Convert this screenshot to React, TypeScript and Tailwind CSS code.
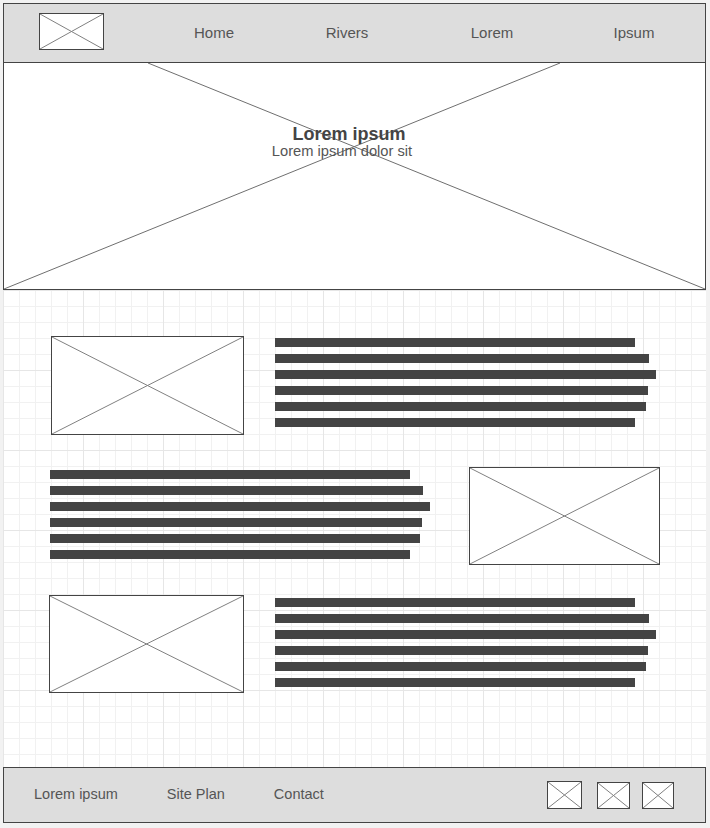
import React from "react";

function Placeholder({ className = "" }: { className?: string }) {
  return (
    <div className={`relative shrink-0 border border-[#444] bg-white ${className}`}>
      <svg className="absolute inset-0 h-full w-full" viewBox="0 0 100 100" preserveAspectRatio="none">
        <line x1="0" y1="0" x2="100" y2="100" stroke="#808080" strokeWidth="1" vectorEffect="non-scaling-stroke" />
        <line x1="100" y1="0" x2="0" y2="100" stroke="#808080" strokeWidth="1" vectorEffect="non-scaling-stroke" />
      </svg>
    </div>
  );
}

function Bars({ widths }: { widths: number[] }) {
  return (
    <div className="flex flex-col gap-[7px]">
      {widths.map((w, i) => (
        <div key={i} className="h-[9px] bg-[#444]" style={{ width: w }} />
      ))}
    </div>
  );
}

const rightBars = [360, 374, 381, 373, 371, 360];
const leftBars = [360, 373, 380, 372, 370, 360];

export default function App() {
  return (
    <div className="h-[828px] w-[710px] bg-[#f2f2f2] pl-[3px] pt-[3px] font-['Liberation_Sans',Arial,sans-serif]">
      <div className="w-[703px]">
        {/* Header */}
        <header className="flex h-[60px] items-center border border-[#444] bg-[#dddddd] text-[15px] text-[#555]">
          <Placeholder className="mb-[3px] ml-[35px] h-[37px] w-[65px]" />
          <a className="ml-[70px] w-[80px] text-center">Home</a>
          <a className="ml-[53px] w-[80px] text-center">Rivers</a>
          <a className="ml-[65px] w-[80px] text-center">Lorem</a>
          <a className="ml-[62px] w-[80px] text-center">Ipsum</a>
        </header>

        {/* Hero */}
        <section className="relative h-[227px] border-x border-b border-[#444] bg-white">
          <svg className="absolute inset-0 h-full w-full" viewBox="0 0 701 226" preserveAspectRatio="none">
            <line x1="144" y1="0" x2="701" y2="226" stroke="#6f6f6f" strokeWidth="1" />
            <line x1="556" y1="0" x2="0" y2="226" stroke="#6f6f6f" strokeWidth="1" />
          </svg>
          <div className="relative flex flex-col items-center pt-[61px]">
            <h1 className="pr-[11px] text-[18px] font-bold leading-[20px] text-[#444]">Lorem ipsum</h1>
            <p className="pr-[25px] text-[14.7px] leading-[15px] text-[#555]">Lorem ipsum dolor sit</p>
          </div>
        </section>

        {/* Content on grid */}
        <main className="h-[477px] bg-white bg-[linear-gradient(to_right,#e6e6e6_1px,transparent_1px),linear-gradient(to_bottom,#e6e6e6_1px,transparent_1px),linear-gradient(to_right,#f1f1f1_1px,transparent_1px),linear-gradient(to_bottom,#f1f1f1_1px,transparent_1px)] bg-[size:80px_80px,80px_80px,16px_16px,16px_16px] pt-[46px]">
          <div className="flex items-start">
            <Placeholder className="ml-[48px] h-[99px] w-[193px]" />
            <div className="ml-[31px] mt-[2px]">
              <Bars widths={rightBars} />
            </div>
          </div>

          <div className="mt-[32px] flex items-start">
            <div className="ml-[47px] mt-[3px]">
              <Bars widths={leftBars} />
            </div>
            <Placeholder className="ml-[39px] h-[98px] w-[191px]" />
          </div>

          <div className="mt-[30px] flex items-start">
            <Placeholder className="ml-[46px] h-[98px] w-[195px]" />
            <div className="ml-[31px] mt-[3px]">
              <Bars widths={rightBars} />
            </div>
          </div>
        </main>

        {/* Footer */}
        <footer className="flex h-[56px] items-center border border-[#444] bg-[#dddddd] text-[14.5px] text-[#555]">
          <div className="ml-[30px] flex gap-[49px]">
            <a>Lorem ipsum</a>
            <a>Site Plan</a>
            <a>Contact</a>
          </div>
          <div className="ml-auto mr-[31px] flex items-center">
            <Placeholder className="h-[28px] w-[35px]" />
            <Placeholder className="ml-[15px] h-[27px] w-[33px]" />
            <Placeholder className="ml-[12px] h-[27px] w-[32px]" />
          </div>
        </footer>
      </div>
    </div>
  );
}
